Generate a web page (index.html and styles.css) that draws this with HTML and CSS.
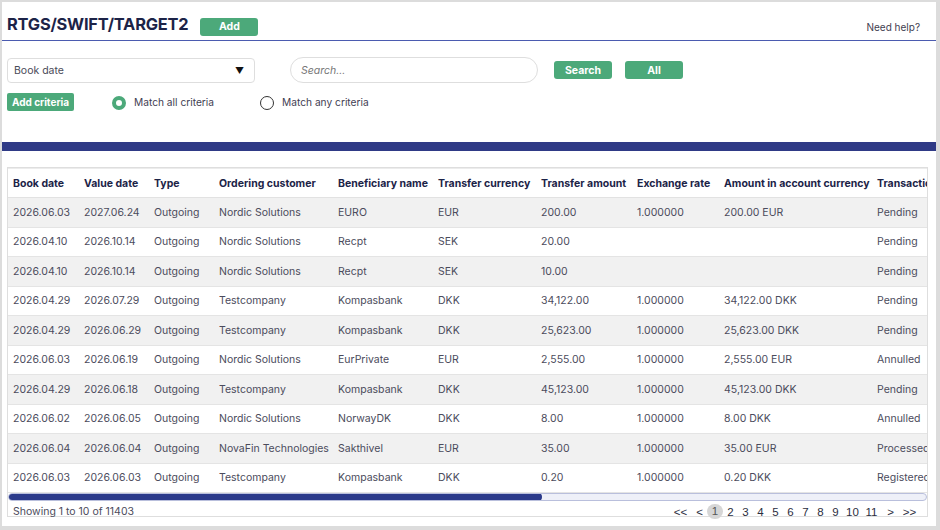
FILE: index.html
```html
<!DOCTYPE html>
<html lang="en">

<head>
    <meta charset="UTF-8">
    <title>RTGS/SWIFT/TARGET2</title>
    <link rel="stylesheet" href="styles.css">
</head>

<body>
    <div class="frame">
        <div class="head">
            <h1>RTGS/SWIFT/TARGET2</h1>
            <span class="btn btn_add">Add</span>
            <a class="help">Need help?</a>
        </div>

        <div class="filters">
            <div class="row">
                <div class="select">Book date <span class="caret">&#9660;</span></div>
                <div class="search">Search...</div>
                <span class="btn btn_search">Search</span>
                <span class="btn btn_all">All</span>
            </div>
            <div class="row row2">
                <span class="btn btn_crit">Add criteria</span>
                <label class="radio on"><i></i>Match all criteria</label>
                <label class="radio"><i></i>Match any criteria</label>
            </div>
        </div>

        <div class="band"></div>

        <div class="box">
            <div class="scroller">
                <table>
                    <colgroup>
                        <col style="width:71px">
                        <col style="width:70px">
                        <col style="width:65px">
                        <col style="width:119px">
                        <col style="width:100px">
                        <col style="width:103px">
                        <col style="width:96px">
                        <col style="width:87px">
                        <col style="width:153px">
                        <col style="width:120px">
                    </colgroup>
                    <thead>
                        <tr>
                            <th>Book date</th>
                            <th>Value date</th>
                            <th>Type</th>
                            <th>Ordering customer</th>
                            <th>Beneficiary name</th>
                            <th>Transfer currency</th>
                            <th>Transfer amount</th>
                            <th>Exchange rate</th>
                            <th>Amount in account currency</th>
                            <th>Transaction status</th>
                        </tr>
                    </thead>
                    <tbody>
                        <tr><td>2026.06.03</td><td>2027.06.24</td><td>Outgoing</td><td>Nordic Solutions</td><td>EURO</td><td>EUR</td><td>200.00</td><td>1.000000</td><td>200.00 EUR</td><td>Pending</td></tr>
                        <tr><td>2026.04.10</td><td>2026.10.14</td><td>Outgoing</td><td>Nordic Solutions</td><td>Recpt</td><td>SEK</td><td>20.00</td><td></td><td></td><td>Pending</td></tr>
                        <tr><td>2026.04.10</td><td>2026.10.14</td><td>Outgoing</td><td>Nordic Solutions</td><td>Recpt</td><td>SEK</td><td>10.00</td><td></td><td></td><td>Pending</td></tr>
                        <tr><td>2026.04.29</td><td>2026.07.29</td><td>Outgoing</td><td>Testcompany</td><td>Kompasbank</td><td>DKK</td><td>34,122.00</td><td>1.000000</td><td>34,122.00 DKK</td><td>Pending</td></tr>
                        <tr><td>2026.04.29</td><td>2026.06.29</td><td>Outgoing</td><td>Testcompany</td><td>Kompasbank</td><td>DKK</td><td>25,623.00</td><td>1.000000</td><td>25,623.00 DKK</td><td>Pending</td></tr>
                        <tr><td>2026.06.03</td><td>2026.06.19</td><td>Outgoing</td><td>Nordic Solutions</td><td>EurPrivate</td><td>EUR</td><td>2,555.00</td><td>1.000000</td><td>2,555.00 EUR</td><td>Annulled</td></tr>
                        <tr><td>2026.04.29</td><td>2026.06.18</td><td>Outgoing</td><td>Testcompany</td><td>Kompasbank</td><td>DKK</td><td>45,123.00</td><td>1.000000</td><td>45,123.00 DKK</td><td>Pending</td></tr>
                        <tr><td>2026.06.02</td><td>2026.06.05</td><td>Outgoing</td><td>Nordic Solutions</td><td>NorwayDK</td><td>DKK</td><td>8.00</td><td>1.000000</td><td>8.00 DKK</td><td>Annulled</td></tr>
                        <tr><td>2026.06.04</td><td>2026.06.04</td><td>Outgoing</td><td>NovaFin Technologies</td><td>Sakthivel</td><td>EUR</td><td>35.00</td><td>1.000000</td><td>35.00 EUR</td><td>Processed</td></tr>
                        <tr><td>2026.06.03</td><td>2026.06.03</td><td>Outgoing</td><td>Testcompany</td><td>Kompasbank</td><td>DKK</td><td>0.20</td><td>1.000000</td><td>0.20 DKK</td><td>Registered</td></tr>
                    </tbody>
                </table>
            </div>
            <div class="hbar"><div class="thumb"></div></div>
            <div class="foot">
                <span class="info">Showing 1 to 10 of 11403</span>
                <div class="pager">
                    <span>&lt;&lt;</span>
                    <span>&lt;</span>
                    <span class="cur">1</span>
                    <span>2</span>
                    <span>3</span>
                    <span>4</span>
                    <span>5</span>
                    <span>6</span>
                    <span>7</span>
                    <span>8</span>
                    <span>9</span>
                    <span>10</span>
                    <span>11</span>
                    <span>&gt;</span>
                    <span>&gt;&gt;</span>
                </div>
            </div>
        </div>
    </div>
</body>

</html>
```

FILE: styles.css
```css
* {
    margin: 0;
    padding: 0;
    box-sizing: border-box;
}

body {
    background-color: #dcdcdc;
    padding: 2px 4px 4px 2px;
    font-family: Inter, "Liberation Sans", sans-serif;
    font-size: 10.5px;
    color: #4b4b5c;
}

.frame {
    width: 934px;
    height: 524px;
    background: #fff;
    display: flex;
    flex-direction: column;
}

/* header */
.head {
    height: 39px;
    border-bottom: 1px solid #4b5bb0;
    display: flex;
    align-items: center;
    padding: 6px 16px 0 5px;
}

.head h1 {
    font-size: 16.4px;
    font-weight: 700;
    color: #1c2347;
    letter-spacing: -0.2px;
}

.help {
    margin-left: auto;
    font-size: 10px;
    color: #3f4050;
    padding-top: 6px;
}

.btn {
    display: inline-flex;
    align-items: center;
    justify-content: center;
    background: #4ca97a;
    color: #fff;
    font-weight: 700;
    font-size: 10.5px;
    border-radius: 3px;
    height: 18px;
}

.btn_add {
    width: 58px;
    margin-left: 12px;
    margin-top: 5px;
}

/* filters */
.filters {
    height: 101px;
    padding: 16px 0 0 5px;
}

.row {
    display: flex;
    align-items: center;
}

.select {
    width: 248px;
    height: 25px;
    border: 1px solid #dedede;
    border-radius: 4px;
    display: flex;
    align-items: center;
    padding: 0 8px 0 6px;
    color: #4a4a58;
}

.caret {
    margin-left: auto;
    font-size: 9px;
    color: #111;
    padding-right: 2px;
}

.search {
    width: 248px;
    height: 26px;
    border: 1px solid #dedede;
    border-radius: 13px;
    margin-left: 35px;
    display: flex;
    align-items: center;
    padding-left: 10px;
    font-style: italic;
    color: #777;
}

.btn_search {
    width: 58px;
    margin-left: 16px;
}

.btn_all {
    width: 58px;
    margin-left: 13px;
}

.row2 {
    margin-top: 10px;
}

.btn_crit {
    width: 67px;
    border-radius: 2px;
    font-size: 10px;
}

.radio {
    display: flex;
    align-items: center;
    color: #3f4053;
    font-size: 10.2px;
}

.radio i {
    width: 14px;
    height: 14px;
    border-radius: 50%;
    border: 1px solid #333;
    margin-right: 8px;
    margin-top: 2px;
}

.radio.on {
    margin-left: 38px;
}

.radio.on i {
    border: 4.5px solid #4ca97a;
    background: #fff;
}

.radio + .radio {
    margin-left: 46px;
}

.band {
    height: 9px;
    background: #2f3a86;
}

/* table */
.box {
    margin: 16px 8px 0 5px;
    border: 1px solid #dedede;
    height: 350px;
}

.scroller {
    overflow: hidden;
}

table {
    border-collapse: collapse;
    table-layout: fixed;
    width: 984px;
}

th {
    text-align: left;
    font-weight: 700;
    color: #1c2347;
    height: 29px;
    padding: 0 0 0 5px;
    white-space: nowrap;
    overflow: hidden;
    border-bottom: 1px solid #e2e2e2;
    border-top: 1px solid #ececec;
}

td {
    height: 29.5px;
    padding: 0 0 0 5px;
    white-space: nowrap;
    overflow: hidden;
    color: #4b4b5c;
    border-bottom: 1px solid #e4e4e4;
}

tbody tr:nth-child(odd) td {
    background: #f1f1f1;
}

.hbar {
    height: 8px;
    border: 1px solid #b9bfdc;
    border-radius: 4px;
    background: #eef0f8;
    overflow: hidden;
}

.thumb {
    width: 534px;
    background: #2b3a8a;
    border-radius: 4px;
    margin-top: -1px;
    height: 8px;
    margin-left: -1px;
}

.foot {
    display: flex;
    align-items: center;
    height: 21px;
    padding: 0 8px 0 5px;
}

.pager {
    margin-left: auto;
    display: flex;
    align-items: center;
    color: #2a2d3e;
    font-family: "Liberation Sans", sans-serif;
    font-size: 11.5px;
}

.pager span {
    min-width: 15px;
    text-align: center;
}

.pager span:first-child {
    margin-right: 4px;
}

.pager .cur {
    background: #d6d6d6;
    border-radius: 8px;
    color: #555;
    width: 16px;
    height: 15px;
    line-height: 15px;
}

.pager span:nth-child(n+12) {
    min-width: 19px;
}
```
